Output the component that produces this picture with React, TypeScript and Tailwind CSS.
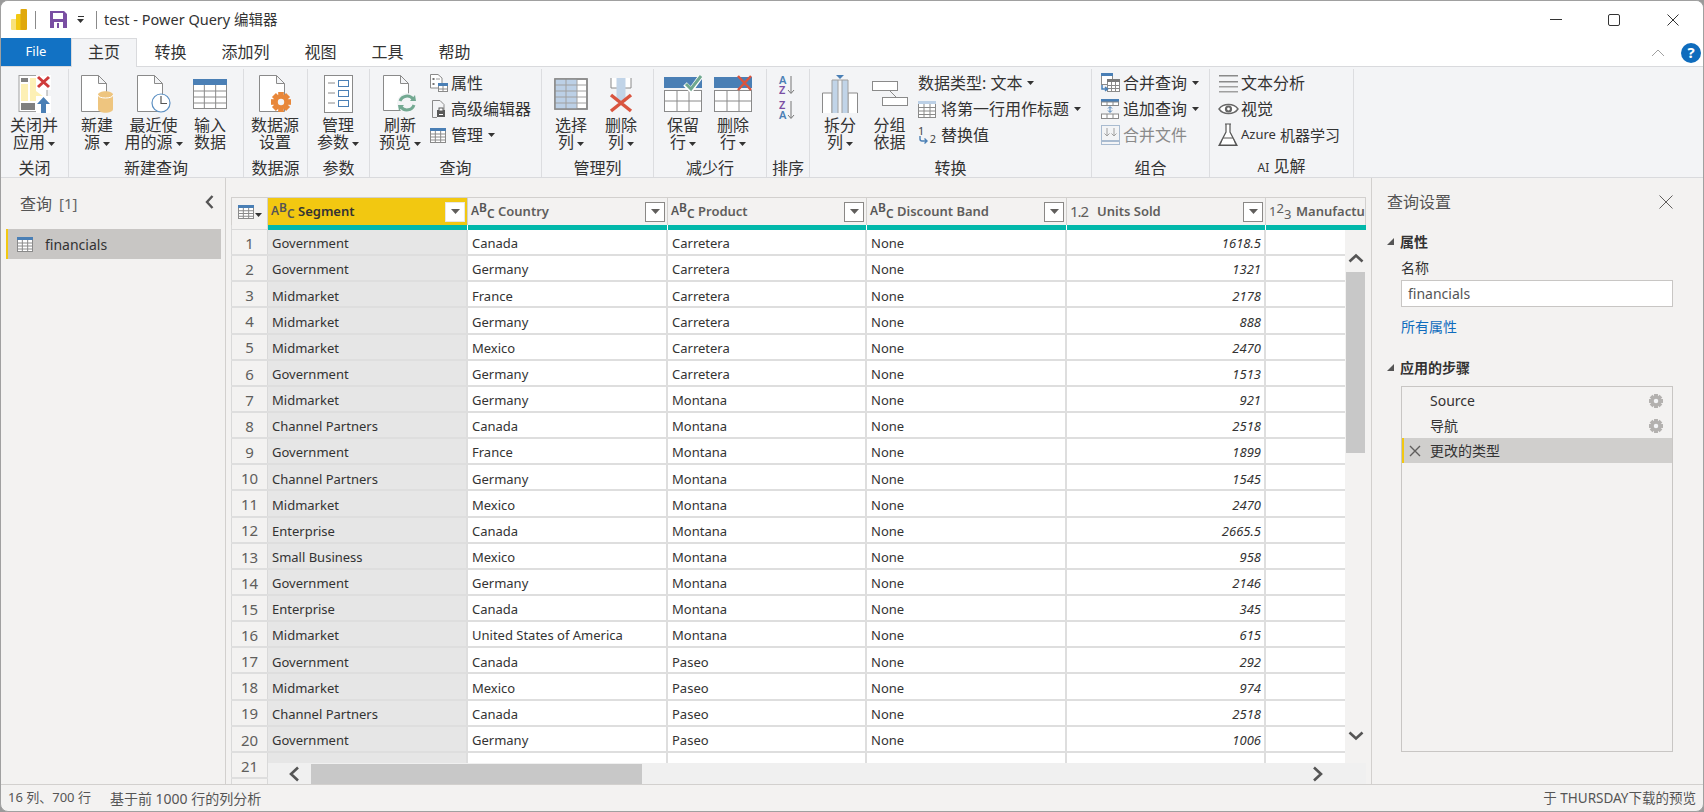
const rows: [string, string, string, string][] = [
  ["Government", "Canada", "Carretera", "1618.5"],
  ["Government", "Germany", "Carretera", "1321"],
  ["Midmarket", "France", "Carretera", "2178"],
  ["Midmarket", "Germany", "Carretera", "888"],
  ["Midmarket", "Mexico", "Carretera", "2470"],
  ["Government", "Germany", "Carretera", "1513"],
  ["Midmarket", "Germany", "Montana", "921"],
  ["Channel Partners", "Canada", "Montana", "2518"],
  ["Government", "France", "Montana", "1899"],
  ["Channel Partners", "Germany", "Montana", "1545"],
  ["Midmarket", "Mexico", "Montana", "2470"],
  ["Enterprise", "Canada", "Montana", "2665.5"],
  ["Small Business", "Mexico", "Montana", "958"],
  ["Government", "Germany", "Montana", "2146"],
  ["Enterprise", "Canada", "Montana", "345"],
  ["Midmarket", "United States of America", "Montana", "615"],
  ["Government", "Canada", "Paseo", "292"],
  ["Midmarket", "Mexico", "Paseo", "974"],
  ["Channel Partners", "Canada", "Paseo", "2518"],
  ["Government", "Germany", "Paseo", "1006"],
];

const G = "#8a8a8a";

function Caret({ className = "" }: { className?: string }) {
  return (
    <svg width="7" height="4" viewBox="0 0 7 4" className={`inline-block align-middle ${className}`}>
      <polygon points="0,0 7,0 3.5,4" fill="#333" />
    </svg>
  );
}

function Doc({ w = 25, h = 36, x = 0.5, y = 0.5 }: { w?: number; h?: number; x?: number; y?: number }) {
  return (
    <path
      d={`M${x} ${y}H${x + w - 8}L${x + w} ${y + 8}V${y + h}H${x}Z M${x + w - 8} ${y}V${y + 8}H${x + w}`}
      fill="#fff"
      stroke={G}
      strokeWidth="1"
    />
  );
}

function GridTable({ w = 34, h = 30, top = "#4a7fb5" }: { w?: number; h?: number; top?: string }) {
  const tb = Math.round(h / 5);
  const cols = [1, 2].map((i) => (w * i) / 3);
  const lines = [1, 2, 3].map((i) => tb + ((h - tb) * i) / 4);
  return (
    <svg width={w} height={h} viewBox={`0 0 ${w} ${h}`}>
      <rect x="0.5" y="0.5" width={w - 1} height={h - 1} fill="#fff" stroke={G} />
      <rect x="0" y="0" width={w} height={tb} fill={top} />
      {cols.map((c) => (
        <line key={c} x1={c} x2={c} y1={tb} y2={h} stroke={G} />
      ))}
      {lines.map((l) => (
        <line key={l} x1="0" x2={w} y1={l} y2={l} stroke={G} />
      ))}
    </svg>
  );
}

function CloseApplyIcon() {
  return (
    <svg width="33" height="38" viewBox="0 0 33 38">
      <rect x="1" y="0.5" width="28" height="36" fill="#fff" stroke="#a0a0a0" />
      <rect x="3" y="3" width="7" height="4" fill="#808080" />
      <rect x="3" y="9" width="7" height="17" fill="#fdf0b5" />
      <path d="M12 3H18V16L26 22V26H12Z" fill="#fdf0b5" />
      <rect x="3" y="28" width="14" height="7" fill="#808080" />
      <rect x="18" y="0" width="15" height="15" fill="#fff" fillOpacity="0.9" />
      <path d="M20 2L31 12M31 2L20 12" stroke="#cf3a3a" strokeWidth="3" />
      <rect x="18" y="21" width="15" height="17" fill="#fff" />
      <path d="M25.5 22L32 29H28V38H23V29H19Z" fill="#4a7fb5" />
    </svg>
  );
}

function NewSourceIcon() {
  return (
    <svg width="33" height="38" viewBox="0 0 33 38">
      <Doc />
      <path d="M17 20C17 15 32 15 32 20V34C32 39 17 39 17 34Z" fill="#eec57f" />
      <path d="M17 20C17 24 32 24 32 20" fill="none" stroke="#fff" strokeWidth="1" />
    </svg>
  );
}

function RecentIcon() {
  return (
    <svg width="34" height="38" viewBox="0 0 34 38">
      <Doc />
      <circle cx="24" cy="28" r="9" fill="#fff" stroke="#5b8fc2" strokeWidth="1.2" />
      <path d="M24 21V28.5H30" fill="none" stroke="#555" strokeWidth="1.2" />
    </svg>
  );
}

function GearShape({ cx, cy, r, color }: { cx: number; cy: number; r: number; color: string }) {
  const teeth = [0, 45, 90, 135];
  return (
    <g>
      {teeth.map((a) => (
        <rect
          key={a}
          x={cx - r * 0.28}
          y={cy - r}
          width={r * 0.56}
          height={r * 2}
          fill={color}
          transform={`rotate(${a} ${cx} ${cy})`}
        />
      ))}
      <circle cx={cx} cy={cy} r={r * 0.72} fill={color} />
      <circle cx={cx} cy={cy} r={r * 0.32} fill="#f3f4f6" />
    </g>
  );
}

function DataSourceIcon() {
  return (
    <svg width="33" height="38" viewBox="0 0 33 38">
      <Doc />
      <GearShape cx={22} cy={27} r={10} color="#e8873a" />
    </svg>
  );
}

function ParamsIcon() {
  return (
    <svg width="29" height="38" viewBox="0 0 29 38">
      <rect x="0.5" y="0.5" width="28" height="37" fill="#fff" stroke={G} />
      {[5, 15, 25].map((y) => (
        <g key={y}>
          <line x1="4" x2="11" y1={y + 3} y2={y + 3} stroke={G} />
          <rect x="14.5" y={y + 0.5} width="10" height="6" fill="#fff" stroke="#4a7fb5" />
        </g>
      ))}
    </svg>
  );
}

function RefreshIcon() {
  return (
    <svg width="34" height="38" viewBox="0 0 34 38">
      <Doc h={35} />
      <circle cx="24" cy="28" r="10" fill="#f3f4f6" />
      <path d="M17 26A7.5 7.5 0 0 1 30 24" fill="none" stroke="#73a992" strokeWidth="3" />
      <polygon points="27,26 33,26 32,20" fill="#73a992" />
      <path d="M31 30A7.5 7.5 0 0 1 18 32" fill="none" stroke="#73a992" strokeWidth="3" />
      <polygon points="21,30 15,30 16,36" fill="#73a992" />
    </svg>
  );
}

function SelectColsIcon() {
  return (
    <svg width="34" height="32" viewBox="0 0 34 32">
      <rect x="1" y="1" width="32" height="30" fill="#fff" stroke={G} strokeWidth="1.5" />
      <rect x="1" y="1" width="22" height="30" fill="#bcd0e6" />
      {[7, 13, 19, 25].map((y) => (
        <line key={y} x1="1" x2="33" y1={y} y2={y} stroke="#a0a0a0" />
      ))}
      {[12, 23].map((x) => (
        <line key={x} x1={x} x2={x} y1="1" y2="31" stroke="#a0a0a0" />
      ))}
      <rect x="1" y="1" width="32" height="30" fill="none" stroke={G} strokeWidth="1.5" />
    </svg>
  );
}

function DeleteColIcon() {
  return (
    <svg width="24" height="38" viewBox="0 0 24 38">
      <path d="M2 3V13H22V3" fill="#fff" stroke={G} />
      <rect x="7.5" y="3" width="9" height="24" fill="#c1d4e8" />
      <path d="M2 20L22 36M22 20L2 36" stroke="#d9543f" strokeWidth="3.5" />
    </svg>
  );
}

function RowsIcon({ remove }: { remove?: boolean }) {
  return (
    <svg width="38" height="38" viewBox="0 0 38 38">
      <rect x="0" y="2" width="38" height="11" fill="#4a7fb5" />
      <rect x="0.5" y="15.5" width="37" height="21" fill="#fff" stroke={G} />
      <line x1="0" x2="38" y1="26" y2="26" stroke={G} />
      <line x1="13" x2="13" y1="16" y2="36" stroke={G} />
      <line x1="25" x2="25" y1="16" y2="36" stroke={G} />
      {remove ? (
        <path d="M24 1L37 15M37 1L24 15" stroke="#d9543f" strokeWidth="2.5" />
      ) : (
        <>
          <path d="M21 9L27 15L37 1" fill="none" stroke="#fff" strokeWidth="5" />
          <path d="M22 9L27 14L37 1" fill="none" stroke="#6fa88f" strokeWidth="3" />
        </>
      )}
    </svg>
  );
}

function SortIcon({ a, b, ca, cb }: { a: string; b: string; ca: string; cb: string }) {
  return (
    <div className="flex h-[20px] w-[18px] items-center">
      <div className="flex flex-col text-[11px] leading-[10px] font-semibold">
        <span className={ca}>{a}</span>
        <span className={cb}>{b}</span>
      </div>
      <svg width="8" height="19" viewBox="0 0 8 19" className="ml-[1px]">
        <path d="M4 0V17M1 14L4 17.5L7 14" fill="none" stroke="#777" />
      </svg>
    </div>
  );
}

function SplitIcon() {
  return (
    <svg width="36" height="38" viewBox="0 0 36 38">
      <polygon points="14,0 22,0 18,4" fill="#4a7fb5" />
      <path d="M0.5 38V18H10V38M35.5 38V18H26V38" fill="#fff" stroke={G} />
      <rect x="10" y="5" width="6" height="33" fill="#c1d4e8" />
      <rect x="20" y="5" width="6" height="33" fill="#c1d4e8" />
      <path d="M10 38V5H26V38M16 5V38M20 5V38" fill="none" stroke="#a0a0a0" />
    </svg>
  );
}

function GroupByIcon() {
  return (
    <svg width="36" height="26" viewBox="0 0 36 26">
      <rect x="0.5" y="0.5" width="25" height="9" fill="#fff" stroke={G} />
      <rect x="10.5" y="16.5" width="25" height="8" fill="#fff" stroke={G} />
      <path d="M18 10L24 16" stroke={G} />
    </svg>
  );
}

function SmallPropsIcon() {
  return (
    <svg width="18" height="18" viewBox="0 0 18 18">
      <path d="M0.5 0.5H8L12 4V14H0.5Z" fill="#fff" stroke={G} />
      <rect x="2.5" y="4" width="2" height="2" fill="#777" />
      <rect x="2.5" y="9" width="2" height="2" fill="#777" />
      <line x1="6" x2="10" y1="5" y2="5" stroke="#999" />
      <rect x="8.5" y="9.5" width="9" height="8" fill="#fff" stroke={G} />
      <rect x="8" y="9" width="10" height="3" fill="#4a7fb5" />
      <path d="M13 12V18M8 15H18" stroke={G} />
    </svg>
  );
}

function AdvEditorIcon() {
  return (
    <svg width="18" height="18" viewBox="0 0 18 18">
      <path d="M2.5 0.5H10L14 4.5V12" fill="none" stroke={G} />
      <path d="M2.5 0.5V17.5H7" fill="none" stroke={G} />
      <rect x="7" y="10" width="8" height="7" fill="#5a5a5a" />
      <rect x="9" y="8" width="4" height="3" fill="#fff" stroke="#5a5a5a" />
      <rect x="9" y="14" width="4" height="1" fill="#fff" />
    </svg>
  );
}

function ReplaceIcon() {
  return (
    <div className="relative h-[20px] w-[18px] text-[11px] leading-[11px] text-[#444]">
      <span className="absolute top-0 left-0">1</span>
      <span className="absolute right-0 bottom-[1px]">2</span>
      <svg width="9" height="8" viewBox="0 0 9 8" className="absolute bottom-[1px] left-[1px]">
        <path d="M1 0V3Q1 5 3 5H8M5.5 2.5L8 5L5.5 7.5" fill="none" stroke="#4a7fb5" strokeWidth="1.4" />
      </svg>
    </div>
  );
}

function MergeIcon() {
  return (
    <svg width="19" height="20" viewBox="0 0 19 20">
      <rect x="0.5" y="0.5" width="11" height="11" fill="#fff" stroke={G} />
      <rect x="0" y="0" width="12" height="3" fill="#4a7fb5" />
      <rect x="6.5" y="6.5" width="12" height="12" fill="#fff" stroke={G} />
      <rect x="6" y="6" width="13" height="3" fill="#7a7a7a" />
      <path d="M10.5 9V19M14.5 9V19M7 12.5H18M7 15.5H18" stroke={G} />
      <path d="M1 12V16H6M4 14L6.5 16L4 18" fill="none" stroke="#4a7fb5" strokeWidth="1.5" />
    </svg>
  );
}

function AppendIcon() {
  return (
    <svg width="19" height="20" viewBox="0 0 19 20">
      <rect x="0" y="0" width="18" height="3" fill="#4a7fb5" />
      <rect x="0.5" y="3" width="17" height="3.5" fill="#fff" stroke={G} />
      <path d="M6 3V7M12 3V7" stroke={G} />
      <path d="M9 8V13M7 9.5L9 7.5L11 9.5M7 11.5L9 13.5L11 11.5" fill="none" stroke="#4a7fb5" />
      <rect x="0.5" y="15" width="17" height="4.5" fill="#fff" stroke={G} />
      <path d="M6 15V20M12 15V20" stroke={G} />
    </svg>
  );
}

function CombineIcon() {
  return (
    <svg width="19" height="20" viewBox="0 0 19 20">
      <rect x="0.5" y="0.5" width="18" height="19" fill="#f3f4f6" stroke="#a9bbd0" />
      <path d="M6 3V11M3.5 8.5L6 11L8.5 8.5M13 3V11M10.5 8.5L13 11L15.5 8.5" fill="none" stroke="#a0a0a0" />
      <rect x="1" y="15" width="17" height="2" fill="#a9bbd0" />
    </svg>
  );
}

function TextLinesIcon() {
  return (
    <svg width="20" height="20" viewBox="0 0 20 20">
      <rect x="1" y="2" width="19" height="1.5" fill="#8a8a8a" />
      <rect x="1" y="8" width="19" height="1.5" fill="#8a8a8a" />
      <rect x="1" y="13" width="19" height="1.5" fill="#a0a0a0" />
      <rect x="1" y="18" width="19" height="1.5" fill="#a0a0a0" />
    </svg>
  );
}

function EyeIcon() {
  return (
    <svg width="21" height="14" viewBox="0 0 21 14">
      <path d="M1 7C5 1 16 1 20 7C16 13 5 13 1 7Z" fill="#fff" stroke="#666" strokeWidth="1.4" />
      <circle cx="10.5" cy="7" r="3.6" fill="#666" />
      <circle cx="10.5" cy="7" r="1.4" fill="#fff" />
    </svg>
  );
}

function FlaskIcon() {
  return (
    <svg width="20" height="24" viewBox="0 0 20 24">
      <path d="M7 1H13M8 1V9L1 22.5H19L12 9V1" fill="#fff" stroke="#555" strokeWidth="1.2" />
      <path d="M5 15H15L18 22H2Z" fill="#fff" stroke="#555" />
    </svg>
  );
}

function BigBtn({
  icon,
  l1,
  l2,
  caret,
  className,
}: {
  icon: React.ReactNode;
  l1: string;
  l2: string;
  caret?: boolean;
  className: string;
}) {
  return (
    <div className={`flex flex-col items-center pt-[6px] ${className}`}>
      <div className="flex h-[38px] items-center justify-center">{icon}</div>
      <div className="mt-[4px] whitespace-nowrap text-center leading-[17px]">{l1}</div>
      <div className="whitespace-nowrap text-center leading-[17px]">
        {l2}
        {caret && <Caret className="ml-[3px]" />}
      </div>
    </div>
  );
}

function SmallBtn({
  icon,
  children,
  caret,
  muted,
  iconBox = "w-[21px]",
}: {
  icon?: React.ReactNode;
  children: React.ReactNode;
  caret?: boolean;
  muted?: boolean;
  iconBox?: string;
}) {
  return (
    <div className={`flex h-[26px] items-center whitespace-nowrap ${muted ? "text-[#8a8a8a]" : ""}`}>
      {icon && <div className={`flex shrink-0 items-center ${iconBox}`}>{icon}</div>}
      {children}
      {caret && <Caret className="ml-[5px]" />}
    </div>
  );
}

function Group({
  label,
  className,
  children,
}: {
  label: React.ReactNode;
  className: string;
  children: React.ReactNode;
}) {
  return (
    <div className={`flex h-[108px] shrink-0 flex-col border-r border-[#dcdde0] ${className}`}>
      <div className="flex h-[90px]">{children}</div>
      <div className="text-center leading-[18px]">{label}</div>
    </div>
  );
}

function Ribbon() {
  return (
    <div className="flex h-[112px] border-y border-[#d9dadd] bg-[#f3f4f6] pt-[2px] text-[16px] text-[#333]">
      <Group label="关闭" className="w-[68px]">
        <BigBtn className="w-[66px]" icon={<CloseApplyIcon />} l1="关闭并" l2="应用" caret />
      </Group>
      <Group label="新建查询" className="w-[175px]">
        <BigBtn className="w-[56px]" icon={<NewSourceIcon />} l1="新建" l2="源" caret />
        <BigBtn className="w-[57px]" icon={<RecentIcon />} l1="最近使" l2="用的源" caret />
        <BigBtn className="w-[56px]" icon={<GridTable />} l1="输入" l2="数据" />
      </Group>
      <Group label="数据源" className="w-[64px]">
        <BigBtn className="w-[62px]" icon={<DataSourceIcon />} l1="数据源" l2="设置" />
      </Group>
      <Group label="参数" className="w-[62px]">
        <BigBtn className="w-[60px]" icon={<ParamsIcon />} l1="管理" l2="参数" caret />
      </Group>
      <Group label="查询" className="w-[172px]">
        <BigBtn className="w-[60px]" icon={<RefreshIcon />} l1="刷新" l2="预览" caret />
        <div className="pt-[1px]">
          <SmallBtn icon={<SmallPropsIcon />}>属性</SmallBtn>
          <SmallBtn icon={<AdvEditorIcon />}>高级编辑器</SmallBtn>
          <SmallBtn caret icon={<GridTable w={16} h={15} />}>
            管理
          </SmallBtn>
        </div>
      </Group>
      <Group label="管理列" className="w-[112px]">
        <BigBtn className="ml-[4px] w-[50px]" icon={<SelectColsIcon />} l1="选择" l2="列" caret />
        <BigBtn className="w-[50px]" icon={<DeleteColIcon />} l1="删除" l2="列" caret />
      </Group>
      <Group label="减少行" className="w-[113px]">
        <BigBtn className="ml-[4px] w-[50px]" icon={<RowsIcon />} l1="保留" l2="行" caret />
        <BigBtn className="w-[50px]" icon={<RowsIcon remove />} l1="删除" l2="行" caret />
      </Group>
      <Group label="排序" className="w-[43px]">
        <div className="flex w-full flex-col items-center gap-[5px] pt-[6px]">
          <SortIcon a="A" b="Z" ca="text-[#4a7fb5]" cb="text-[#7a4fa3]" />
          <SortIcon a="Z" b="A" ca="text-[#7a4fa3]" cb="text-[#4a7fb5]" />
        </div>
      </Group>
      <Group label="转换" className="w-[282px]">
        <BigBtn className="w-[60px]" icon={<SplitIcon />} l1="拆分" l2="列" caret />
        <BigBtn className="w-[39px]" icon={<GroupByIcon />} l1="分组" l2="依据" />
        <div className="ml-[9px] pt-[1px]">
          <SmallBtn caret>数据类型: 文本</SmallBtn>
          <SmallBtn caret icon={<GridTable w={18} h={17} top="#bcd0e6" />} iconBox="w-[23px]">
            将第一行用作标题
          </SmallBtn>
          <SmallBtn icon={<ReplaceIcon />} iconBox="w-[23px]">
            替换值
          </SmallBtn>
        </div>
      </Group>
      <Group label="组合" className="w-[118px]">
        <div className="ml-[9px] pt-[1px]">
          <SmallBtn caret icon={<MergeIcon />} iconBox="w-[22px]">
            合并查询
          </SmallBtn>
          <SmallBtn caret icon={<AppendIcon />} iconBox="w-[22px]">
            追加查询
          </SmallBtn>
          <SmallBtn muted icon={<CombineIcon />} iconBox="w-[22px]">
            合并文件
          </SmallBtn>
        </div>
      </Group>
      <Group
        label={
          <>
            <span className="text-[12px]">AI</span> 见解
          </>
        }
        className="w-[144px]"
      >
        <div className="ml-[8px] pt-[1px]">
          <SmallBtn icon={<TextLinesIcon />} iconBox="w-[23px]">
            文本分析
          </SmallBtn>
          <SmallBtn icon={<EyeIcon />} iconBox="w-[23px]">
            视觉
          </SmallBtn>
          <SmallBtn icon={<FlaskIcon />} iconBox="w-[23px]">
            <span className="text-[13px]">Azure</span>
            <span className="ml-[4px] text-[15px]">机器学习</span>
          </SmallBtn>
        </div>
      </Group>
    </div>
  );
}

function TitleBar() {
  return (
    <div className="flex h-[37px] shrink-0 items-center bg-white text-[#333]">
      <svg width="16" height="21" viewBox="0 0 16 21" className="ml-[10px]">
        <rect x="0" y="10" width="7" height="11" rx="1" fill="#f8e27a" />
        <rect x="5" y="5" width="6" height="16" rx="1" fill="#f2c811" />
        <rect x="9.5" y="0" width="6.5" height="21" rx="1" fill="#e0a80b" />
      </svg>
      <div className="ml-[8px] h-[18px] w-px bg-[#8a8a8a]" />
      <svg width="17" height="17" viewBox="0 0 17 17" className="ml-[14px]">
        <path d="M0 0H14L17 3V17H0Z" fill="#7a4fa3" />
        <rect x="3" y="2" width="10" height="6" fill="#fff" />
        <rect x="4" y="11" width="9" height="6" fill="#fff" />
        <rect x="7" y="12" width="2" height="5" fill="#7a4fa3" />
      </svg>
      <svg width="8" height="7" viewBox="0 0 8 7" className="ml-[10px]">
        <rect x="1" y="0" width="6" height="1" fill="#333" />
        <polygon points="0,3 7,3 3.5,7" fill="#333" />
      </svg>
      <div className="ml-[11px] h-[18px] w-px bg-[#8a8a8a]" />
      <div className="ml-[7px] text-[14.5px]">test - Power Query 编辑器</div>
      <div className="ml-auto flex items-center">
        <svg width="12" height="2" viewBox="0 0 12 2" className="mr-[46px]">
          <rect width="12" height="1" fill="#333" />
        </svg>
        <svg width="12" height="12" viewBox="0 0 12 12" className="mr-[47px]">
          <rect x="0.5" y="0.5" width="11" height="11" rx="1.5" fill="none" stroke="#333" />
        </svg>
        <svg width="12" height="12" viewBox="0 0 12 12" className="mr-[24px]">
          <path d="M0.5 0.5L11.5 11.5M11.5 0.5L0.5 11.5" stroke="#333" />
        </svg>
      </div>
    </div>
  );
}

function Tabs() {
  const tabs = ["转换", "添加列", "视图", "工具", "帮助"];
  return (
    <div className="-mb-px flex h-[29px] shrink-0 items-stretch bg-white text-[16px] text-[#333]">
      <div className="flex w-[70px] items-center justify-center bg-[#1272c4] pb-[1px] text-[13px] text-white">
        File
      </div>
      <div className="relative z-10 flex w-[66px] items-center justify-center border-x border-t border-[#d9dadd] bg-[#f3f4f6] pb-[2px]">
        主页
      </div>
      {tabs.map((t) => (
        <div key={t} className="flex items-center px-[17.5px] pb-[2px]">
          {t}
        </div>
      ))}
      <div className="ml-auto flex items-center">
        <svg width="14" height="8" viewBox="0 0 14 8" className="mr-[16px]">
          <path d="M1 7L7 1L13 7" fill="none" stroke="#a0a0a0" />
        </svg>
        <div className="mr-[2px] flex h-[20px] w-[20px] items-center justify-center rounded-full bg-[#0f6cbd] text-[15px] leading-none font-bold text-white">
          ?
        </div>
      </div>
    </div>
  );
}

function QueriesPane() {
  return (
    <div className="flex w-[225px] shrink-0 flex-col border-r border-[#d2d0ce]">
      <div className="flex h-[51px] items-center pr-[11px] pl-[19px] text-[#555]">
        <span className="text-[16px]">查询</span>
        <span className="ml-[7px] text-[15px] text-[#666]">[1]</span>
        <svg width="9" height="14" viewBox="0 0 9 14" className="mb-[4px] ml-auto">
          <path d="M7.5 1L2 7L7.5 13" fill="none" stroke="#555" strokeWidth="2.4" />
        </svg>
      </div>
      <div className="ml-[5px] flex h-[30px] w-[215px] items-center border-l-2 border-[#f2c811] bg-[#c8c6c4] pl-[9px] text-[14px] text-[#333]">
        <GridTable w={16} h={15} />
        <span className="ml-[12px]">financials</span>
      </div>
    </div>
  );
}

function TypeAbc() {
  return (
    <div className="flex h-[20px] w-[20px] shrink-0 text-[12px] text-[#555]">
      <span className="mt-[3px] leading-[12px]">A</span>
      <span className="leading-[12px]">B</span>
      <span className="mt-[6px] leading-[12px]">C</span>
    </div>
  );
}

function HeaderDrop({ selected }: { selected?: boolean }) {
  return (
    <div
      className={`ml-auto flex h-[20px] w-[20px] shrink-0 items-center justify-center border bg-white ${
        selected ? "border-[#e8e6e3]" : "border-[#8a8886]"
      }`}
    >
      <svg width="9" height="5" viewBox="0 0 9 5">
        <polygon points="0,0 9,0 4.5,5" fill="#605e5c" />
      </svg>
    </div>
  );
}

function HeaderCell({
  name,
  className,
  type,
  selected,
  noDrop,
}: {
  name: string;
  className: string;
  type: React.ReactNode;
  selected?: boolean;
  noDrop?: boolean;
}) {
  return (
    <div
      className={`flex h-full items-center border-r border-[#d2d0ce] pr-[2px] pl-[3px] text-[13px] font-semibold whitespace-nowrap ${className} ${
        selected ? "bg-[#f2c811] text-[#333]" : "text-[#605e5c]"
      }`}
    >
      {type}
      <span className="ml-[7px]">{name}</span>
      {!noDrop && <HeaderDrop selected={selected} />}
    </div>
  );
}

function DataGrid() {
  const num = (
    <span className="w-[20px] shrink-0 text-[15px] leading-none font-normal tracking-[-1px] text-[#605e5c]">1.2</span>
  );
  const int = (
    <div className="flex h-[20px] w-[20px] shrink-0 text-[13px] font-normal text-[#605e5c]">
      <span className="mt-[3px] leading-[13px]">1</span>
      <span className="leading-[13px]">2</span>
      <span className="mt-[6px] leading-[13px]">3</span>
    </div>
  );
  const numCell =
    "flex w-[37px] shrink-0 items-center justify-center border-x border-[#d9d9d9] pt-[2px] text-[15px] text-[#605e5c]";
  const cell = "flex shrink-0 items-center border-r-2 border-[#dedede] pt-[4px]";
  return (
    <div className="flex min-w-0 flex-1 flex-col pt-[19px] pr-[5px] pl-[5px]">
      <div className="relative flex-1 overflow-hidden">
        <div className="flex h-[28px] w-[1135px] border-t border-[#d2d0ce]">
          <div className="flex h-full w-[37px] shrink-0 items-center gap-[1px] border-x border-[#d2d0ce] pl-[6px]">
            <GridTable w={16} h={14} top="#4a7fb5" />
            <Caret className="mt-[6px]" />
          </div>
          <HeaderCell name="Segment" className="w-[200px] shrink-0" type={<TypeAbc />} selected />
          <HeaderCell name="Country" className="w-[200px] shrink-0" type={<TypeAbc />} />
          <HeaderCell name="Product" className="w-[199px] shrink-0" type={<TypeAbc />} />
          <HeaderCell name="Discount Band" className="w-[200px] shrink-0" type={<TypeAbc />} />
          <HeaderCell name="Units Sold" className="w-[199px] shrink-0" type={num} />
          <HeaderCell name="Manufacturing Price" className="w-[100px] shrink-0 overflow-hidden" type={int} noDrop />
        </div>
        <div className="flex h-[5px] w-[1135px]">
          <div className="w-[37px] border-x border-b border-[#d9d9d9]" />
          <div className="h-full w-[200px] border-r border-white bg-[#01b8aa]" />
          <div className="h-full w-[200px] border-r border-white bg-[#01b8aa]" />
          <div className="h-full w-[199px] border-r border-white bg-[#01b8aa]" />
          <div className="h-full w-[200px] border-r border-white bg-[#01b8aa]" />
          <div className="h-full w-[199px] border-r border-white bg-[#01b8aa]" />
          <div className="h-full w-[100px] bg-[#01b8aa]" />
        </div>
        <div className="w-[1114px] overflow-hidden text-[13px] text-[#333]">
          {rows.map((r, i) => (
            <div key={i} className="flex h-[26.15px] border-b-2 border-[#dedede]">
              <div className={numCell}>{i + 1}</div>
              <div className={`${cell} w-[200px] bg-[#e6e6e6] pl-[4px]`}>{r[0]}</div>
              <div className={`${cell} w-[200px] bg-white pl-[4px]`}>{r[1]}</div>
              <div className={`${cell} w-[199px] bg-white pl-[4px]`}>{r[2]}</div>
              <div className={`${cell} w-[200px] bg-white pl-[4px]`}>None</div>
              <div className={`${cell} w-[199px] justify-end bg-white pr-[3px] italic`}>{r[3]}</div>
              <div className="flex-1 bg-white" />
            </div>
          ))}
          <div className="flex h-[26.15px] border-b-2 border-[#dedede]">
            <div className={numCell}>21</div>
            <div className="flex w-[200px] shrink-0 items-center border-r-2 border-[#dedede] bg-[#e6e6e6] pt-[9px] pl-[4px]">
              Midmarket
            </div>
            <div className={`${cell} w-[200px] bg-white`} />
            <div className={`${cell} w-[199px] bg-white`} />
            <div className={`${cell} w-[200px] bg-white`} />
            <div className={`${cell} w-[199px] bg-white`} />
            <div className="flex-1 bg-white" />
          </div>
          <div className="h-[10px] w-[37px] border-x border-[#d9d9d9]" />
        </div>
        {/* scrollbars sit on top of the cells */}
        <div className="absolute top-[33px] right-0 bottom-0 flex w-[21px] flex-col items-center bg-[#f3f2f1]">
          <svg width="16" height="10" viewBox="0 0 16 10" className="mt-[23px] mb-[9px] shrink-0">
            <path d="M1.5 8.5L8 2.5L14.5 8.5" fill="none" stroke="#555" strokeWidth="2.6" />
          </svg>
          <div className="h-[181px] w-[19px] shrink-0 bg-[#c8c8c8]" />
          <svg width="16" height="10" viewBox="0 0 16 10" className="mt-[278px] shrink-0">
            <path d="M1.5 1.5L8 7.5L14.5 1.5" fill="none" stroke="#555" strokeWidth="2.6" />
          </svg>
        </div>
        <div className="absolute bottom-0 left-[37px] flex h-[21px] w-[1098px] items-center bg-[#f0f0f0]">
          <svg width="12" height="16" viewBox="0 0 12 16" className="ml-[20px] shrink-0">
            <path d="M10 1.5L3 8L10 14.5" fill="none" stroke="#555" strokeWidth="2.6" />
          </svg>
          <div className="ml-[11px] h-[20px] w-[331px] shrink-0 bg-[#c8c8c8]" />
          <svg width="12" height="16" viewBox="0 0 12 16" className="ml-[670px] shrink-0">
            <path d="M2 1.5L9 8L2 14.5" fill="none" stroke="#555" strokeWidth="2.6" />
          </svg>
        </div>
      </div>
    </div>
  );
}

function Tri() {
  return (
    <svg width="7" height="7" viewBox="0 0 7 7" className="shrink-0">
      <polygon points="7,0 7,7 0,7" fill="#555" />
    </svg>
  );
}

function SettingsPane() {
  return (
    <div className="flex w-[332px] shrink-0 flex-col border-l border-[#d2d0ce] pr-[30px] pl-[15px] text-[14px] text-[#333]">
      <div className="flex h-[48px] items-center justify-between pr-[1px]">
        <span className="text-[16px] text-[#555]">查询设置</span>
        <svg width="14" height="14" viewBox="0 0 14 14" className="-mr-[1px]">
          <path d="M0.5 0.5L13.5 13.5M13.5 0.5L0.5 13.5" stroke="#605e5c" />
        </svg>
      </div>
      <div className="mt-[3px] flex h-[24px] items-center gap-[6px] font-semibold">
        <Tri />
        属性
      </div>
      <div className="mt-[3px] ml-[14px] leading-[24px]">名称</div>
      <div className="ml-[14px] flex h-[27px] items-center border border-[#c8c6c4] bg-white pl-[6px] text-[#555]">
        financials
      </div>
      <div className="mt-[8px] ml-[14px] leading-[24px] text-[#0f6cbd]">所有属性</div>
      <div className="mt-[16px] flex h-[24px] items-center gap-[6px] font-semibold">
        <Tri />
        应用的步骤
      </div>
      <div className="mt-[7px] ml-[14px] flex h-[366px] flex-col border border-[#c8c6c4] py-[1px]">
        {["Source", "导航"].map((s) => (
          <div key={s} className="flex h-[25px] items-center pr-[8px] pl-[28px]">
            {s}
            <svg width="16" height="16" viewBox="0 0 16 16" className="ml-auto">
              <GearShape cx={8} cy={8} r={7} color="#b3b1af" />
            </svg>
          </div>
        ))}
        <div className="flex h-[25px] items-center border-l-2 border-[#f2c811] bg-[#d0cfcd]">
          <svg width="12" height="12" viewBox="0 0 12 12" className="ml-[5px]">
            <path d="M1 1L11 11M11 1L1 11" stroke="#605e5c" strokeWidth="1.4" />
          </svg>
          <span className="ml-[9px]">更改的类型</span>
        </div>
      </div>
    </div>
  );
}

export default function App() {
  return (
    <div className="h-[812px] w-[1704px] bg-[#9a9a9a] font-['Noto_Sans','Noto_Sans_CJK_SC',sans-serif]">
      <div className="flex h-full flex-col overflow-hidden rounded-[8px] border border-[#a0a0a0] bg-[#f3f2f1]">
        <TitleBar />
        <Tabs />
        <Ribbon />
        <div className="flex min-h-0 flex-1">
          <QueriesPane />
          <DataGrid />
          <SettingsPane />
        </div>
        <div className="flex h-[27px] shrink-0 items-center border-t border-[#d2d0ce] px-[7px] text-[13px] text-[#555]">
          <span>16 列、700 行</span>
          <span className="ml-[19px] text-[14px]">基于前 1000 行的列分析</span>
          <span className="ml-auto text-[13.5px]">于 THURSDAY下载的预览</span>
        </div>
      </div>
    </div>
  );
}
